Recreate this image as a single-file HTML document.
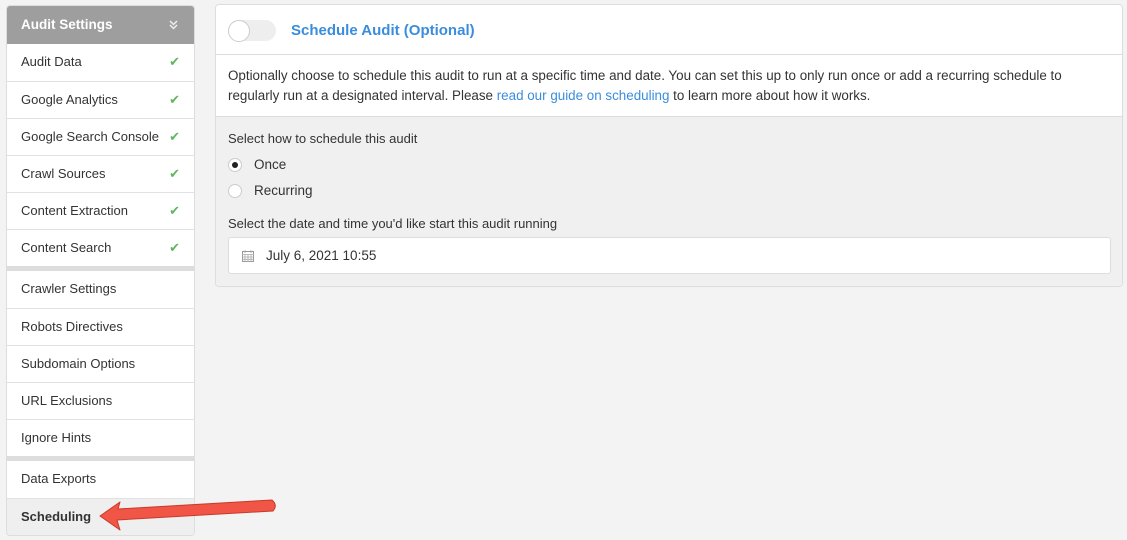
<!DOCTYPE html>
<html><head><style>
*{box-sizing:border-box;margin:0;padding:0}
body{width:1127px;height:540px;background:#f3f3f3;font-family:"Liberation Sans",sans-serif;color:#333;position:relative;overflow:hidden}
.sb{position:absolute;left:6px;top:5px;width:189px;border:1px solid #ddd;border-radius:4px;background:#fff;overflow:hidden}
.hd{height:38px;background:#9e9e9e;color:#fff;font-weight:bold;font-size:13.5px;line-height:38px;padding-left:14px;position:relative}
.it{height:37px;border-top:1px solid #e2e2e2;font-size:13px;line-height:36px;padding-left:14px;position:relative;color:#333}
.it .ck{position:absolute;right:14px;top:0;color:#5cb85c;font-size:13px}
.sep{height:5px;background:#ddd}
.main{position:absolute;left:215px;top:4px;width:908px;height:283px;border:1px solid #ddd;border-radius:4px;background:#fff;overflow:hidden}
.mh{height:50px;border-bottom:1px solid #ddd;position:relative}
.tg{position:absolute;left:12px;top:15px;width:48px;height:21px;border-radius:11px;background:#eee}
.tg:before{content:"";position:absolute;left:0;top:0;width:20px;height:20px;border-radius:50%;background:#fff;border:1px solid #ccc}
.mh h3{position:absolute;left:75px;top:17px;color:#3a8dde;font-size:15px;font-weight:bold}
.desc{height:62px;padding:11px 12px;font-size:13.4px;line-height:20px;border-bottom:1px solid #ddd}
.desc a{color:#3a8dde;text-decoration:none}
.gs{background:#f0f0f0;height:171px}
.lbl{position:absolute;left:12px;font-size:13px;color:#333}
.rd{position:absolute;left:12px;width:14px;height:14px;border-radius:50%;background:#fff;border:1px solid #ccc}
.rd.on:after{content:"";position:absolute;left:3px;top:3px;width:6px;height:6px;border-radius:50%;background:#222}
.inp{position:absolute;left:12px;top:232px;width:883px;height:37px;background:#fff;border:1px solid #ddd;border-radius:3px;font-size:13.5px;line-height:36px;padding-left:37px}
</style></head><body>
<div class="sb">
<div class="hd">Audit Settings<svg style="position:absolute;right:16px;top:14px" width="9" height="10" viewBox="0 0 9 10"><path d="M1 1l3.5 3.5L8 1M1 5l3.5 3.5L8 5" fill="none" stroke="#eee" stroke-width="1.5"/></svg></div>
<div class="it" style="border-top:0">Audit Data<span class="ck">✔</span></div>
<div class="it">Google Analytics<span class="ck">✔</span></div>
<div class="it">Google Search Console<span class="ck">✔</span></div>
<div class="it">Crawl Sources<span class="ck">✔</span></div>
<div class="it">Content Extraction<span class="ck">✔</span></div>
<div class="it">Content Search<span class="ck">✔</span></div>
<div class="sep"></div>
<div class="it" style="border-top:0">Crawler Settings</div>
<div class="it">Robots Directives</div>
<div class="it">Subdomain Options</div>
<div class="it">URL Exclusions</div>
<div class="it">Ignore Hints</div>
<div class="sep"></div>
<div class="it" style="border-top:0">Data Exports</div>
<div class="it" style="background:#efefef;font-weight:bold">Scheduling</div>
</div>
<div class="main">
<div class="mh"><div class="tg"></div><h3>Schedule Audit (Optional)</h3></div>
<div class="desc">Optionally choose to schedule this audit to run at a specific time and date. You can set this up to only run once or add a recurring schedule to regularly run at a designated interval. Please <a>read our guide on scheduling</a> to learn more about how it works.</div>
<div class="gs"></div>
<div class="lbl" style="top:126px">Select how to schedule this audit</div>
<div class="rd on" style="top:153px"></div><div class="lbl" style="left:38px;top:152px;font-size:13.5px">Once</div>
<div class="rd" style="top:179px"></div><div class="lbl" style="left:38px;top:178px;font-size:13.5px">Recurring</div>
<div class="lbl" style="top:211px">Select the date and time you'd like start this audit running</div>
<div class="inp"><svg style="position:absolute;left:13px;top:12px" width="12" height="12" viewBox="0 0 12 12"><rect x="0.5" y="1.5" width="11" height="10" fill="none" stroke="#999"/><path d="M0 4.5h12M3 0v3M9 0v3M0 7h12M0 9.3h12M3 4v8M6 4v8M9 4v8" stroke="#aaa" stroke-width="0.8"/></svg>July 6, 2021 10:55</div>
</div>
<svg style="position:absolute;left:0;top:0" width="1127" height="540"><path d="M100 516 L120 502 L118 509 L272 500 Q278 505 273 511 L117 520 L120 530 Z" fill="#f05545" stroke="#c83a2c" stroke-width="1" stroke-linejoin="round"/></svg>
</body></html>
